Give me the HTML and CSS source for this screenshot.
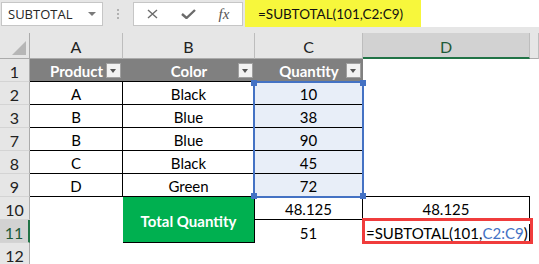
FILE: index.html
```html
<!DOCTYPE html>
<html lang="en">
<head>
    <meta charset="UTF-8">
    <title>SUBTOTAL average</title>
    <link rel="stylesheet" href="styles.css">
</head>
<body>
    <div class="topbar">
        <div class="namebox"><span>SUBTOTAL</span><span class="caret"></span></div>
        <div class="grip"><i></i><i></i><i></i></div>
        <div class="fnbox">
            <span class="slot">
                <svg width="11" height="10" viewBox="0 0 11 10"><path d="M1 1 L10 9 M10 1 L1 9" stroke="#6b6b6b" stroke-width="1.4" fill="none"/></svg>
            </span>
            <span class="slot">
                <svg width="15" height="10" viewBox="0 0 15 10"><path d="M1 5 L5.5 9 L14 1" stroke="#6b6b6b" stroke-width="2.4" fill="none"/></svg>
            </span>
            <span class="slot fx">fx</span>
        </div>
        <div class="formula"><span class="hl">=SUBTOTAL(101,C2:C9)</span></div>
    </div>

    <div class="sheet">
        <div class="corner"><span class="tri"></span></div>
        <div class="colhead">A</div>
        <div class="colhead">B</div>
        <div class="colhead">C</div>
        <div class="colhead sel">D</div>
        <div class="colhead"></div>

        <div class="rowhead">1</div>
        <div class="th">Product<span class="filter"></span></div>
        <div class="th">Color<span class="filter"></span></div>
        <div class="th">Quantity<span class="filter"></span></div>
        <div class="blank"></div>
        <div class="blank"></div>

        <div class="rowhead">2</div>
        <div class="td">A</div>
        <div class="td">Black</div>
        <div class="td qty">10</div>
        <div class="blank"></div>
        <div class="blank"></div>

        <div class="rowhead">3</div>
        <div class="td">B</div>
        <div class="td">Blue</div>
        <div class="td qty">38</div>
        <div class="blank"></div>
        <div class="blank"></div>

        <div class="rowhead">7</div>
        <div class="td">B</div>
        <div class="td">Blue</div>
        <div class="td qty">90</div>
        <div class="blank"></div>
        <div class="blank"></div>

        <div class="rowhead">8</div>
        <div class="td">C</div>
        <div class="td">Black</div>
        <div class="td qty">45</div>
        <div class="blank"></div>
        <div class="blank"></div>

        <div class="rowhead">9</div>
        <div class="td">D</div>
        <div class="td">Green</div>
        <div class="td qty">72</div>
        <div class="blank under"></div>
        <div class="blank"></div>

        <div class="rowhead">10</div>
        <div class="blank"></div>
        <div class="total">Total Quantity</div>
        <div class="num boxed">48.125</div>
        <div class="num boxed">48.125</div>
        <div class="blank"></div>

        <div class="rowhead sel">11</div>
        <div class="blank"></div>
        <div class="num side">51</div>
        <div class="edit">=SUBTOTAL(101,<span class="ref">C2:C9</span>)<span class="cursor"></span></div>
        <div class="blank"></div>

        <div class="rowhead">12</div>
        <div class="blank"></div>
        <div class="blank"></div>
        <div class="blank"></div>
        <div class="blank"></div>
        <div class="blank"></div>

        <!-- range reference highlight and the marked cell -->
        <div class="refbox">
            <span class="handle tl"></span><span class="handle tr"></span>
            <span class="handle bl"></span><span class="handle br"></span>
        </div>
        <div class="mark"></div>
    </div>
</body>
</html>
```

FILE: styles.css
```css
body {
    margin: 0;
    width: 539px;
    height: 264px;
    overflow: hidden;
    background: #fff;
    font-family: Lato, 'Liberation Sans', sans-serif;
}
.topbar {
    display: flex;
    align-items: flex-start;
    height: 33px;
    background: #e6e6e6;
}
.namebox {
    margin: 2px 0 0 1px;
    width: 102px;
    height: 24px;
    box-sizing: border-box;
    border: 1px solid #c6c6c6;
    background: #fff;
    display: flex;
    align-items: center;
    justify-content: space-between;
    padding: 0 6px 0 6px;
    font: 13px 'Open Sans', sans-serif;
    color: #262626;
}
.caret {
    border-left: 4px solid transparent;
    border-right: 4px solid transparent;
    border-top: 4px solid #7a7a7a;
}
.grip {
    width: 30px;
    display: flex;
    flex-direction: column;
    align-items: center;
    gap: 2px;
    padding-top: 9px;
}
.grip i {
    width: 2px;
    height: 2px;
    background: #b1b1b1;
}
.fnbox {
    margin-top: 2px;
    width: 110px;
    height: 24px;
    box-sizing: border-box;
    border: 1px solid #c6c6c6;
    background: #fff;
    display: flex;
    align-items: center;
}
.slot {
    width: 36px;
    display: flex;
    justify-content: center;
    align-items: center;
}
.fx {
    font: italic 15px 'Liberation Serif', serif;
    color: #555;
}
.formula {
    margin-left: 2px;
    flex: 1;
    height: 27px;
    background: #fff;
    display: flex;
}
.hl {
    width: 176px;
    box-sizing: border-box;
    background: #f7f73c;
    padding-left: 13px;
    display: flex;
    align-items: center;
    font-size: 13.5px;
    color: #111;
}

.sheet {
    position: relative;
    display: grid;
    grid-template-columns: 30px 93px 132px 108px 167px 1fr;
    grid-template-rows: 26px repeat(9, 23px);
    font-size: 15px;
    color: #000;
}
.sheet > div {
    box-sizing: border-box;
    display: flex;
    align-items: center;
    justify-content: center;
    padding-top: 2px;
}
.corner {
    background: #e6e6e6;
    border-right: 1px solid #ababab;
    border-bottom: 1px solid #ababab;
    position: relative;
}
.tri {
    position: absolute;
    right: 3px;
    bottom: 3px;
    border-left: 14px solid transparent;
    border-bottom: 14px solid #b6b6b6;
}
.colhead {
    background: #e6e6e6;
    border-right: 1px solid #bdbdbd;
    border-bottom: 1px solid #ababab;
    color: #222;
    font-size: 16px;
}
.colhead.sel {
    background: #d2d2d2;
    border-bottom: 2px solid #217346;
    color: #1e5a38;
}
.rowhead {
    background: #e6e6e6;
    border-right: 1px solid #ababab;
    border-bottom: 1px solid #d4d4d4;
    color: #222;
    font-size: 16px;
}
.rowhead.sel {
    background: #d2d2d2;
    border-right: 2px solid #217346;
    color: #1e5a38;
}
.th {
    position: relative;
    background: #808080;
    color: #fff;
    font-weight: bold;
    border-bottom: 1px solid #000;
}
.filter {
    position: absolute;
    right: 2px;
    top: 4px;
    width: 15px;
    height: 15px;
    box-sizing: border-box;
    background: #f2f2f2;
    border: 1px solid #a0a0a0;
}
.filter::after {
    content: '';
    position: absolute;
    left: 3px;
    top: 5px;
    border-left: 3.5px solid transparent;
    border-right: 3.5px solid transparent;
    border-top: 4px solid #555;
}
.td {
    border-right: 1px solid #000;
    border-bottom: 1px solid #000;
}
.qty {
    background: #e8eef8;
}
.blank.under {
    border-bottom: 1px solid #000;
}
.total {
    grid-row: span 2;
    background: #00b050;
    color: #fff;
    font-weight: bold;
    border-right: 1px solid #000;
    border-bottom: 1px solid #000;
}
.num.boxed {
    border-right: 1px solid #000;
    border-bottom: 1px solid #000;
}
.num.side {
    border-right: 1px solid #000;
}
.sheet > .edit {
    justify-content: flex-start;
    padding-left: 3px;
}
.ref {
    color: #4472c4;
}
.cursor {
    width: 1px;
    height: 17px;
    margin-left: 1px;
    background: #000;
}

.refbox {
    position: absolute;
    left: 253px;
    top: 48px;
    width: 111px;
    height: 117px;
    box-sizing: border-box;
    border: 2px solid #4472c4;
}
.handle {
    position: absolute;
    width: 6px;
    height: 6px;
    background: #4472c4;
}
.handle.tl { left: -4px; top: -3px; }
.handle.tr { right: -4px; top: -3px; }
.handle.bl { left: -4px; bottom: -3px; }
.handle.br { right: -4px; bottom: -3px; }
.mark {
    position: absolute;
    left: 362px;
    top: 185px;
    width: 171px;
    height: 26px;
    box-sizing: border-box;
    border: 3px solid #f03c3c;
}
```
